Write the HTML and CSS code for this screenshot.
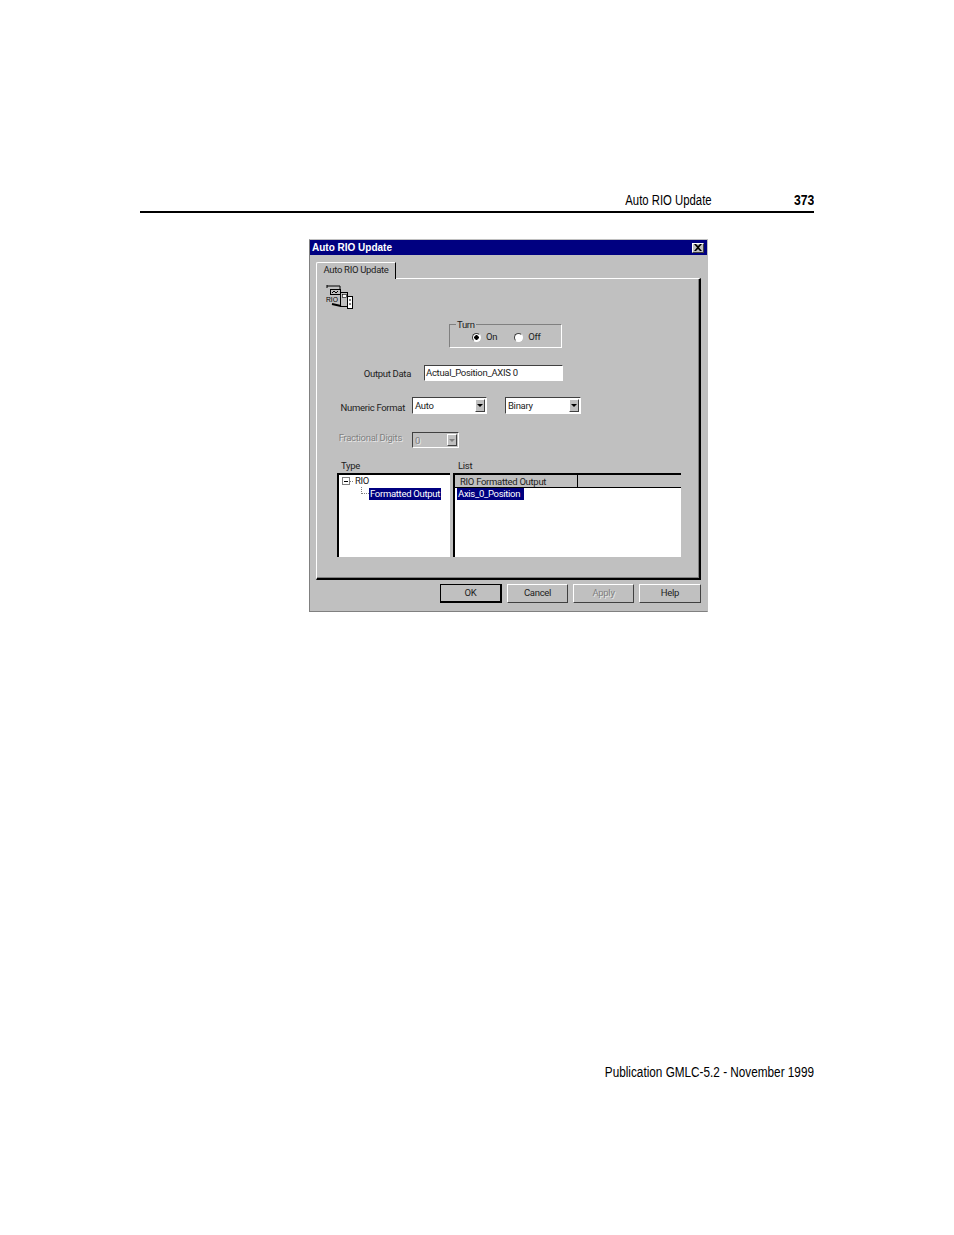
FILE: index.html
```html
<!DOCTYPE html>
<html lang="en">
<head>
    <meta charset="UTF-8">
    <title>Auto RIO Update</title>
    <link rel="stylesheet" href="styles.css">
</head>
<body>
    <div class="page">
        <div class="page-header">
            <span class="page-title">Auto RIO Update</span>
            <span class="page-number">373</span>
        </div>

        <div class="dialog">
            <div class="titlebar">
                <span>Auto RIO Update</span>
                <span class="close-btn">
                    <svg width="8" height="7" viewBox="0 0 8 7"><path d="M0 0h2l2 2 2-2h2L5 3.500 8 7H6L4 5 2 7H0l3-3.500z" fill="#000"/></svg>
                </span>
            </div>

            <div class="tabs">
                <div class="tab">Auto RIO Update</div>
            </div>

            <div class="panel">
                <svg class="rio-icon" width="27" height="25" viewBox="0 0 27 25">
                    <path d="M1 2h13M1 1v3M14 2v3" stroke="#000" fill="none"/>
                    <rect x="4.500" y="5.500" width="10" height="5" fill="#c0c0c0" stroke="#000"/>
                    <path d="M6 9l2-2 2 2 2-2" stroke="#000" fill="none"/>
                    <text x="0" y="18" class="rio-icon-text" textLength="12" lengthAdjust="spacingAndGlyphs">RIO</text>
                    <rect x="14.500" y="8.500" width="7" height="14" fill="#c0c0c0" stroke="#000"/>
                    <rect x="16.500" y="10.500" width="4" height="3" fill="#fff" stroke="#000" stroke-width="0.600"/>
                    <rect x="21.500" y="12.500" width="5" height="12" fill="#fff" stroke="#000"/>
                    <path d="M6 20l9 2" stroke="#000" stroke-width="2" fill="none"/>
                    <path d="M24 15v2M24 19v2" stroke="#000" fill="none"/>
                </svg>

                <div class="turn-group">
                    <span class="turn-legend">Turn</span>
                    <label class="radio-item"><span class="radio checked"></span>On</label>
                    <label class="radio-item"><span class="radio"></span>Off</label>
                </div>

                <div class="row row-output">
                    <span class="row-label">Output Data</span>
                    <div class="textbox">Actual_Position_AXIS 0</div>
                </div>

                <div class="row row-format">
                    <span class="row-label">Numeric Format</span>
                    <div class="combo combo-auto">
                        <span class="combo-text">Auto</span>
                        <span class="combo-arrow"></span>
                    </div>
                    <div class="combo combo-binary">
                        <span class="combo-text">Binary</span>
                        <span class="combo-arrow"></span>
                    </div>
                </div>

                <div class="row row-digits">
                    <span class="row-label disabled">Fractional Digits</span>
                    <div class="combo combo-digits off">
                        <span class="combo-text disabled">0</span>
                        <span class="combo-arrow"></span>
                    </div>
                </div>

                <div class="list-labels">
                    <span class="type-label">Type</span>
                    <span>List</span>
                </div>

                <div class="lists">
                    <div class="tree">
                        <div class="tree-root">
                            <span class="tree-toggle"></span>
                            <span class="tree-dots"></span>
                            <span>RIO</span>
                        </div>
                        <div class="tree-child">
                            <span class="tree-elbow"></span>
                            <span class="tree-selected">Formatted Output</span>
                        </div>
                    </div>
                    <div class="listview">
                        <div class="list-head">
                            <div class="head-cell head-main">RIO Formatted Output</div>
                            <div class="head-cell head-rest"></div>
                        </div>
                        <div class="list-item">Axis_0_Position</div>
                    </div>
                </div>
            </div>

            <div class="buttons">
                <div class="btn btn-default">OK</div>
                <div class="btn">Cancel</div>
                <div class="btn disabled">Apply</div>
                <div class="btn btn-help">Help</div>
            </div>
        </div>

        <div class="page-footer">Publication GMLC-5.2 - November 1999</div>
    </div>
</body>
</html>
```

FILE: styles.css
```css
body {
    margin: 0;
    background: #fff;
    color: #000;
    font-family: "Liberation Sans", Arial, sans-serif;
}

.page {
    width: 674px;
    height: 1235px;
    margin-left: 140px;
    overflow: hidden;
}

/* printed page header and footer, the book face is a condensed one */
.page-header {
    height: 211px;
    border-bottom: 2px solid #000;
    display: flex;
    justify-content: flex-end;
    align-items: flex-end;
    font-size: 14px;
    line-height: 16px;
    margin-bottom: 26px;
}

.page-header span {
    margin-bottom: 3px;
    transform-origin: right center;
}

.page-title {
    margin-right: 79px;
    transform: scaleX(0.81);
}

.page-number {
    font-weight: bold;
    transform: scaleX(0.87);
}

.page-footer {
    margin-top: 452px;
    text-align: right;
    font-size: 14px;
    line-height: 16px;
    transform: scaleX(0.84);
    transform-origin: right center;
}

/* dialog window */
.dialog {
    width: 399px;
    height: 373px;
    box-sizing: border-box;
    margin-left: 169px;
    background: #c0c0c0;
    border-left: 1px solid #808080;
    border-right: 1px solid #c0c0c0;
    border-top: 1px solid #c0c0c0;
    border-bottom: 1px solid #808080;
    font-family: Roboto, "Liberation Sans", sans-serif;
    font-size: 9.500px;
    letter-spacing: -0.300px;
    line-height: 12px;
    color: #222;
}

.titlebar {
    height: 15px;
    background: #000080;
    color: #fff;
    font-family: "Liberation Sans", sans-serif;
    font-weight: bold;
    font-size: 10px;
    letter-spacing: 0;
    line-height: 15px;
    padding: 0 2px;
    display: flex;
    justify-content: space-between;
    align-items: center;
}

.close-btn {
    width: 12px;
    height: 10px;
    box-sizing: border-box;
    background: #c0c0c0;
    border: 1px solid;
    border-color: #fff #404040 #404040 #fff;
    display: flex;
    align-items: center;
    justify-content: center;
    margin-right: 1px;
}

.close-btn svg {
    flex: none;
}

.tabs {
    height: 23px;
    padding-left: 6px;
    display: flex;
    align-items: flex-end;
}

.tab {
    width: 80px;
    height: 17px;
    box-sizing: border-box;
    margin-bottom: -1px;
    position: relative;
    z-index: 1;
    background: #c0c0c0;
    border-top: 1px solid #fff;
    border-left: 1px solid #fff;
    border-right: 1px solid #000;
    border-top-left-radius: 2px;
    text-align: center;
    line-height: 13px;
}

.panel {
    width: 385px;
    height: 302px;
    box-sizing: border-box;
    margin-left: 6px;
    padding-top: 5px;
    border-top: 1px solid #fff;
    border-left: 1px solid #fff;
    border-right: 2px solid #000;
    border-bottom: 2px solid #000;
    box-shadow: inset -1px -1px 0 #808080;
}

.rio-icon {
    display: block;
    margin-left: 9px;
}

.rio-icon-text {
    font-size: 8px;
    letter-spacing: 0;
    font-family: "Liberation Sans", sans-serif;
    fill: #000;
}

/* radio group */
.turn-group {
    position: relative;
    width: 113px;
    height: 24px;
    box-sizing: border-box;
    margin: 15px 0 0 132px;
    padding: 7px 0 0 22px;
    border: 1px solid;
    border-color: #808080 #fff #fff #808080;
    display: flex;
    gap: 17px;
}

.turn-legend {
    position: absolute;
    left: 6px;
    top: -6px;
    padding: 0 1px;
    background: #c0c0c0;
}

.radio-item {
    display: flex;
    align-items: center;
    gap: 5px;
    height: 10px;
}

.radio {
    width: 9px;
    height: 9px;
    box-sizing: border-box;
    border-radius: 50%;
    border: 1px solid;
    border-color: #404040 #fff #fff #404040;
    background: #fff;
    display: block;
}

.radio.checked {
    background: radial-gradient(circle, #000 0 2px, #fff 2.500px);
}

/* form rows */
.row {
    display: flex;
    align-items: flex-start;
}

.row-label {
    text-align: right;
    white-space: nowrap;
}

.row-output {
    margin-top: 17px;
}

.row-output .row-label {
    width: 94px;
    margin-right: 13px;
    padding-top: 3px;
}

.textbox {
    width: 139px;
    height: 16px;
    box-sizing: border-box;
    padding-left: 1px;
    background: #fff;
    border: 1px solid;
    border-color: #404040 #fff #fff #404040;
    line-height: 13px;
    white-space: nowrap;
}

.row-format {
    margin-top: 16px;
    height: 17px;
}

.row-format .row-label {
    width: 88px;
    margin-right: 7px;
    padding-top: 5px;
}

.combo {
    height: 17px;
    box-sizing: border-box;
    background: #fff;
    border: 1px solid;
    border-color: #404040 #fff #fff #404040;
    display: flex;
    justify-content: space-between;
    padding: 1px;
    line-height: 13px;
}

.combo-auto {
    width: 75px;
}

.combo-binary {
    width: 76px;
    margin-left: 18px;
}

.combo-text {
    padding-left: 1px;
}

.combo-arrow {
    width: 10px;
    box-sizing: border-box;
    background: #c0c0c0;
    border: 1px solid;
    border-color: #fff #404040 #404040 #fff;
    position: relative;
}

.combo-arrow::after {
    content: "";
    position: absolute;
    left: 1px;
    top: 4px;
    border-left: 3px solid transparent;
    border-right: 3px solid transparent;
    border-top: 3px solid #000;
}

.row-digits {
    margin-top: 18px;
}

.row-digits .row-label {
    width: 85px;
    margin-right: 10px;
}

.combo-digits {
    width: 47px;
    height: 16px;
    background: #c0c0c0;
    line-height: 14px;
}

.combo.off .combo-arrow::after {
    border-top-color: #808080;
}

.disabled {
    color: #808080;
    text-shadow: 1px 1px 0 #e8e8e8;
}

/* tree and list */
.list-labels {
    margin: 12px 0 0 24px;
    height: 12px;
    display: flex;
}

.type-label {
    width: 117px;
}

.lists {
    margin: 1px 0 0 20px;
    display: flex;
    gap: 3px;
    height: 84px;
}

.tree,
.listview {
    box-sizing: border-box;
    background: #fff;
    border-top: 2px solid #000;
    border-left: 2px solid #000;
}

.tree {
    width: 113px;
    padding: 0 0 0 3px;
}

.tree-root {
    display: flex;
    align-items: center;
    height: 12px;
}

.tree-toggle {
    width: 8px;
    height: 8px;
    box-sizing: border-box;
    border: 1px solid #808080;
    background: linear-gradient(#000, #000) center / 4px 1px no-repeat;
}

.tree-dots {
    width: 3px;
    margin-right: 2px;
    border-top: 1px dotted #808080;
}

.tree-child {
    display: flex;
    align-items: flex-start;
    margin-left: 19px;
    height: 14px;
}

.tree-elbow {
    width: 7px;
    height: 6px;
    border-left: 1px dotted #808080;
    border-bottom: 1px dotted #808080;
}

.tree-selected {
    background: #000080;
    color: #fff;
    outline: 1px dotted #fff;
    padding: 0 1px;
    height: 12px;
    white-space: nowrap;
    margin-top: 1px;
}

.listview {
    width: 228px;
}

.list-head {
    display: flex;
    height: 13px;
    background: #c0c0c0;
}

.head-cell {
    box-sizing: border-box;
    border-bottom: 1px solid #000;
    line-height: 14px;
}

.head-main {
    width: 123px;
    padding-left: 5px;
    border-right: 1px solid #000;
}

.head-rest {
    flex: 1;
}

.list-item {
    display: inline-block;
    background: #000080;
    color: #fff;
    margin: 0 0 0 2px;
    padding: 0 4px 0 1px;
    height: 12px;
}

/* bottom buttons */
.buttons {
    display: flex;
    margin: 4px 0 0 130px;
    gap: 5px;
}

.btn {
    width: 61px;
    height: 19px;
    box-sizing: border-box;
    text-align: center;
    line-height: 16px;
    border: 1px solid;
    border-color: #fff #404040 #404040 #fff;
}

.btn-default {
    width: 62px;
    border: 1px solid #000;
    border-right-width: 2px;
    border-bottom-width: 2px;
}

.btn-help {
    width: 62px;
}
```
